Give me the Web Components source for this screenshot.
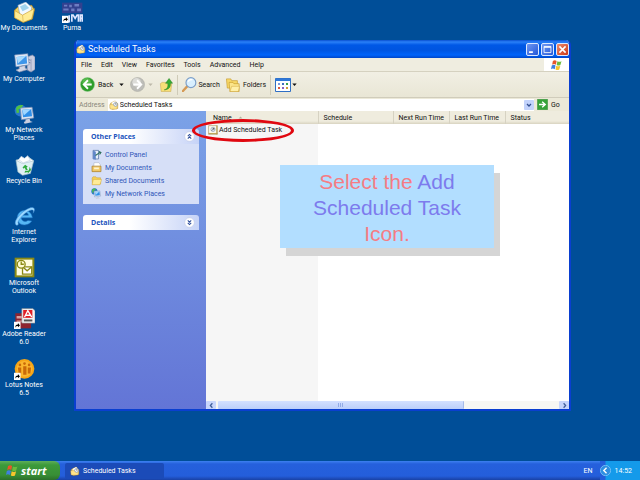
<!DOCTYPE html>
<html lang="en">
<head>
<meta charset="utf-8">
<title>Scheduled Tasks</title>
<style>
html,body{margin:0;height:100%}
body{font:7px/8px Roboto,"Noto Sans",sans-serif;color:#111;background:#004e98;overflow:hidden}
callout-note b{font-weight:400;color:var(--accent)}
</style>
</head>
<body>
<xp-desktop>
  <desk-icon slot="main" icon="mydocs">My Documents</desk-icon>
  <desk-icon slot="main" icon="computer">My Computer</desk-icon>
  <desk-icon slot="main" icon="network">My Network Places</desk-icon>
  <desk-icon slot="main" icon="bin">Recycle Bin</desk-icon>
  <desk-icon slot="main" icon="ie">Internet Explorer</desk-icon>
  <desk-icon slot="main" icon="outlook">Microsoft Outlook</desk-icon>
  <desk-icon slot="main" icon="adobe">Adobe Reader 6.0</desk-icon>
  <desk-icon slot="main" icon="lotus">Lotus Notes 6.5</desk-icon>
  <desk-icon slot="second" icon="puma">Puma</desk-icon>
  <xp-window slot="window" caption="Scheduled Tasks">
    <menu-bar></menu-bar>
    <tool-bar></tool-bar>
    <address-bar value="Scheduled Tasks"></address-bar>
    <explorer-view></explorer-view>
  </xp-window>
  <focus-ring slot="over"></focus-ring>
  <callout-note slot="over"><div>Select the <b>Add</b></div><div><b>Scheduled Task</b></div><div>Icon.</div></callout-note>
  <task-bar slot="bar"></task-bar>
</xp-desktop>
<script>
const shortcut = '<path d="M0 21h10v11H0z" fill="#fff"/><path d="M2 30c0-4 1-5 4-5v-2l3 3.500-3 3v-2c-2 0-3 .500-4 2.500z" fill="#000"/>';
const monitor = (x, y) => `<g transform="translate(${x} ${y})"><path d="M0 1l14-1 2 13-15 2z" fill="#dfe6f2" stroke="#7b93b8"/><path d="M2 3l11-1 1 9-11 1z" fill="#2f8fe8"/><path d="M2 3l11-1-9 8z" fill="#9fd6ff"/><path d="M6 15l5-1 1 3 3 1-10 2-1-2 2-1z" fill="#c9cfdf"/></g>`;
const folder = '<path d="M3 9l3-4h8l3 3h11v18l-3 2H4z" fill="#f4cf57" stroke="#b98a1c"/><path d="M3 28l4-15h24l-5 15z" fill="#ffec96" stroke="#c79a2b"/>';
const globe = '<circle cx="10" cy="10" r="9" fill="#2876cc"/><path d="M3 6c3-5 8-5 11-4l-3 5-4 1 1 5-4 1zM12 9l6-1c1 5-1 8-5 10z" fill="#4fc044"/>';
const flag = '<path d="M5 5c4-3 7-2 10 0l-2 10c-4-3-7-2-10 0z" fill="#e8562a"/><path d="M17 6c4 2 7 2 11 0l-3 10c-3 2-6 2-10 0z" fill="#6dbb3c"/><path d="M2 17c4-2 7-2 10 0l-2 10c-4-2-7-2-10 0z" fill="#3f7fe0"/><path d="M14 18c4 2 7 2 11 0l-3 10c-3 2-6 2-10 0z" fill="#f8c52c"/>';
const task = '<path d="M5 10L20 3l8 9v15l-17 3-8-4z" fill="#f6dc83" stroke="#b18b36" stroke-width="1.500"/><path d="M9 9l11-6 5 9-12 5z" fill="#fff"/><path d="M2 15h26l-3 14H4z" fill="#ffe58a" stroke="#b58b2d"/><circle cx="21" cy="14" r="6" fill="#fff" stroke="#667ea0" stroke-width="2"/><path d="M21 10v4h3" fill="none" stroke="#333" stroke-width="1.500"/>';
const chev = d => `<circle cx="16" cy="16" r="14" fill="#fff" stroke="#c3cce8" stroke-width="2"/><path d="${d}" fill="none" stroke="#2f4f9c" stroke-width="3"/>`;
const GLYPHS = {
  mydocs: '<path d="M1 12l6-5 20-2 4 7-3 14-14 5L1 24z" fill="#f5d25d" stroke="#b98a1c"/><path d="M6 5L18 0l9 8-2 14-15 3z" fill="#f2f9ff" stroke="#8aa7c0"/><path d="M9 7l8-4 6 6-10 5z" fill="#9fd3ee"/><path d="M1 13l12 7 18-10-4 16-13 5L1 24z" fill="#ffec94" stroke="#c99e33"/><path d="M13 20l1 10" stroke="#d8b04a"/>',
  computer: '<path d="M20 6l8-3 4 3v19l-6 4-6-3z" fill="#c9cde0" stroke="#7a83a5"/><path d="M26 9v19" stroke="#8a91b0"/><path d="M22 10l3 1m-3 3l3 1" stroke="#4c577d"/><path d="M1 3l20-2 2 17-20 3z" fill="#e3eaf6" stroke="#7890b8"/><path d="M4 6l15-2 1 12-15 2z" fill="#3f96ea"/><path d="M4 6l15-2L6 16z" fill="#a8dbff"/><path d="M8 21l9-2v4l4 2-13 4-5-3 5-2z" fill="#d3d7e6" stroke="#8b93ad"/>',
  network: `${globe}<g transform="translate(10 5) scale(1.250)">${monitor(0, 0)}</g>`,
  bin: '<path d="M3 8l20-4 7 5-5 19-12 3-7-5z" fill="#dff0f4" stroke="#9dbcc6"/><path d="M3 8l10 5 17-4-7-5z" fill="#fff" stroke="#a8c4ce"/><path d="M7 7l4-5 5 3 5-4 4 7-11 4z" fill="#fff" stroke="#bcd"/><path d="M13 19l4-4 4 3-2 1 2 4h-3l-2-4-1 2zM24 18l2 5-5 5v-2l-5 1 1-3h5l1-2z" fill="#2faa3b"/>',
  ie: '<path d="M27 23c-6 9-22 8-22-5C5 4 26 2 28 18H11c1 7 8 6 10 4zM11 14h11c-1-6-10-6-11 0z" fill="#55b7f4" stroke="#1f74c8" stroke-width=".800"/><path d="M3 29C-4 22 22-2 30 3c3 2 0 7-1 8 1-3 1-5-2-5C20 6 2 24 7 27c-1 2-2 3-4 2z" fill="#9bd8ff" stroke="#2a7bcb" stroke-width=".700"/>',
  outlook: '<path d="M1 1h30v30H1z" fill="#8a8a14"/><path d="M4 4h24v24H4z" fill="#fffde0"/><path d="M13 15h14v11H13z" fill="#fff" stroke="#8a8a14" stroke-width="2"/><path d="M13 15l7 6 7-6" fill="none" stroke="#8a8a14" stroke-width="2"/><circle cx="11" cy="11" r="6" fill="#fffbd0" stroke="#8a8a14" stroke-width="2"/><path d="M11 7v4h4" fill="none" stroke="#8a8a14" stroke-width="2"/>',
  adobe: `<path d="M2 8h24v23H2z" fill="#8e2430"/><path d="M4 12h10v4H4zm0 7h10v2H4z" fill="#d9a0a0"/><path d="M12 1h17l3 3v19H12z" fill="#f3f3f5" stroke="#999"/><path d="M14 3h14v12H14z" fill="#df1f26"/><path d="M16 14l5-10 6 10m-9-3h7" stroke="#fff" stroke-width="2" fill="none"/><path d="M15 19h13" stroke="#555" stroke-width="3"/>${shortcut}`,
  lotus: `<circle cx="16" cy="15" r="15" fill="#f6a516"/><circle cx="16" cy="15" r="12" fill="#fbb62e"/><g fill="#c96a08"><circle cx="9" cy="9" r="2"/><circle cx="16" cy="7" r="2"/><circle cx="23" cy="9" r="2"/><path d="M6 13h5v9H7zM14 11h5v13h-5zM21 13h5l-1 9h-4z"/></g>${shortcut}`,
  puma: `<path d="M0 1h31v16H0z" fill="#32418f"/><path d="M3 4h5v3H3zm8 0h4v4h-4zm8-1h7v4h-7zM2 10h8v3H2zm12 0h5v4h-5zm9 0h6v4h-6z" fill="#6d7cc2"/><path d="M11 20v10H7m8 0V20h2l3 5 3-5h2v10m3 0V20h3v10m-3-5h3" stroke="#dfe6ff" stroke-width="2.500" fill="none"/>${shortcut}`,
  task,
  back: '<circle cx="16" cy="16" r="15" fill="#2d9d2a" stroke="#8cc98a"/><circle cx="14" cy="11" r="9" fill="#6fcb62" opacity=".600"/><path d="M17 7l-9 9 9 9m-8-9h16" fill="none" stroke="#fff" stroke-width="4"/>',
  forward: '<circle cx="16" cy="16" r="15" fill="#bdbdb8" stroke="#a4a49f"/><circle cx="14" cy="11" r="9" fill="#dcdcd8"/><path d="M15 7l9 9-9 9m8-9H7" fill="none" stroke="#fff" stroke-width="4"/>',
  up: '<path d="M3 13l4-3h8l3 3h11l-2 18H5z" fill="#f7df78" stroke="#c09a36"/><path d="M12 27c8-2 9-8 8-15h-5l8-11 8 11h-5c1 9-4 15-14 15z" fill="#37ad32" stroke="#19791a"/>',
  search: '<path d="M12 19L2 30" stroke="#d59a55" stroke-width="5" stroke-linecap="round"/><circle cx="19" cy="12" r="10.500" fill="#d8efff" stroke="#7c9fc9" stroke-width="2.500"/><path d="M13 10c2-4 6-5 9-4" stroke="#fff" stroke-width="3" fill="none"/>',
  folders: '<path d="M1 2h10l2 4h13v17H3z" fill="#f7d867" stroke="#c79a2b" stroke-width="1.500"/><path d="M7 10h9l2 3h12v18H9z" fill="#fbe58b" stroke="#c79a2b" stroke-width="1.500"/><path d="M9 31l4-12h18l-3 12z" fill="#fff0a8" stroke="#c79a2b"/>',
  views: '<path d="M1 3h30v26H1z" fill="#fff" stroke="#2f6fc4" stroke-width="2"/><path d="M1 3h30v5H1z" fill="#2f78d8"/><path d="M6 12h4v4H6z" fill="#7a9adf"/><path d="M14 12h4v4h-4z" fill="#3f6fc0"/><path d="M22 12h4v4h-4z" fill="#36a24a"/><path d="M6 20h4v4H6z" fill="#d8573c"/><path d="M14 20h4v4h-4z" fill="#8b5fc0"/><path d="M22 20h4v4h-4z" fill="#d59a35"/>',
  go: '<path d="M1 1h30v30H1z" fill="#36a238" stroke="#1f7a25"/><path d="M6 16h17M15 8l9 8-9 8" fill="none" stroke="#fff" stroke-width="4"/>',
  flag,
  panel: '<path d="M6 4h16v25H6z" fill="#e9f0fb" stroke="#48699c" stroke-width="2"/><path d="M6 4l8 4v23l-8-3z" fill="#5f86c8"/><path d="M13 19L27 9m-4-2l6 3-4 6" stroke="#2f6f5c" stroke-width="3" fill="none"/>',
  docs: '<path d="M9 2h14l4 6v14H7z" fill="#fff" stroke="#8b93a5"/><path d="M3 12h26v16H3z" fill="#f1c968" stroke="#a67a25" stroke-width="2"/><path d="M9 16h14v5H9z" fill="#fff4cf"/>',
  folder,
  net: `${globe}<g transform="translate(9 8) scale(1.200)">${monitor(0, 0)}</g>`,
  addtask: '<path d="M2 2h28v28H2z" fill="#fffdf0" stroke="#a3905a" stroke-width="2"/><path d="M2 27h28M28 2v28" stroke="#b89c4d" stroke-width="3"/><circle cx="16" cy="14" r="7" fill="#dfe8f5" stroke="#8a98ae" stroke-width="2"/><path d="M12 18l7-7m-4 0h4v4" stroke="#333" stroke-width="2" fill="none"/>',
  collapse: chev('M11 15l5-5 5 5M11 22l5-5 5 5'),
  expand: chev('M11 10l5 5 5-5M11 17l5 5 5-5'),
  min: '<path d="M6 21h11v5H6z" fill="#fff"/>',
  max: '<path d="M6 7h20v18H6z" fill="none" stroke="#fff" stroke-width="2.500"/><path d="M6 9h20" stroke="#fff" stroke-width="4"/>',
  close: '<path d="M7 7l18 18M25 7L7 25" stroke="#fff" stroke-width="4.500"/>',
  down: '<path d="M8 12l8 8 8-8" stroke="#344f8f" stroke-width="5" fill="none"/>',
  left: '<path d="M20 6l-9 10 9 10" stroke="#42609c" stroke-width="6" fill="none"/>',
  right: '<path d="M12 6l9 10-9 10" stroke="#42609c" stroke-width="6" fill="none"/>',
  caret: '<path d="M2 10h28L16 25z" fill="#111"/>',
  caretoff: '<path d="M2 10h28L16 25z" fill="#bdb9aa"/>',
  sort: '<path d="M4 22h24L16 10z" fill="#b5b09c"/>',
  tray: '<circle cx="16" cy="16" r="15" fill="#2f8fe0" stroke="#8fd0ff" stroke-width="2"/><path d="M19 8l-8 8 8 8" stroke="#fff" stroke-width="4" fill="none"/>'
};
const g = (name, size) => `<xp-glyph name="${name}" style="--size:${size}px"></xp-glyph>`;
const define = (tag, html) => customElements.define(tag, class extends HTMLElement {
  constructor() {
    super();
    this.attachShadow({mode: 'open'});
  }
  connectedCallback() {
    this.shadowRoot.innerHTML = '<style>:host,*{box-sizing:border-box}button,input{font:inherit;color:inherit;background:none;border:0;padding:0;margin:0}</style>' + (typeof html === 'function' ? html(this) : html);
  }
});

define('xp-glyph', el => `<style>:host{display:block;flex:none;width:var(--size);height:var(--size)}svg{display:block;width:100%;height:100%}</style>
<svg viewBox="0 0 32 32" aria-hidden="true">${GLYPHS[el.getAttribute('name')]}</svg>`);

define('desk-icon', el => `<style>:host{display:block;color:#fff;text-align:center}
button{display:flex;flex-direction:column;align-items:center;gap:1px;width:100%}</style>
<button>${g(el.getAttribute('icon'), 21)}<span><slot></slot></span></button>`);

define('xp-desktop', `<style>:host{display:flex;flex-direction:column;min-height:100vh;position:relative;background:#004e98}
main{flex:1;display:grid;grid-template-columns:48px 48px 1fr;position:relative}
.col{display:grid;grid-auto-rows:51px;align-content:start;padding-top:2px}
.win{position:absolute;top:40px;left:74px;right:69px;bottom:50px;display:flex}
::slotted(xp-window){flex:1}</style>
<main><div class="col"><slot name="main"></slot></div><div class="col"><slot name="second"></slot></div>
<div class="win"><slot name="window"></slot></div><slot name="over"></slot></main><slot name="bar"></slot>`);

define('xp-window', el => `<style>:host{display:flex;flex-direction:column;background:#ece9d8;border:2px solid #0a3fd0;border-top:0;border-radius:5px 5px 0 0;overflow:hidden}
header{display:flex;align-items:center;gap:2px;height:18px;background:linear-gradient(#0a50d0,#2a80f8 2px,#0058e6 5px,#0055e0 10px,#0064fa 15px,#0046c8);color:#fff}
h1{font:400 9px/12px Roboto,"Noto Sans",sans-serif;margin:0;flex:1}
.b{display:grid;place-items:center;width:13px;height:13px;border:1px solid #dce8ff;border-radius:2px;background:linear-gradient(135deg,#6f97f2,#2458d8)}
.x{background:linear-gradient(135deg,#f08a6c,#c93a17)}
.set{display:flex;gap:2px}</style>
<header>${g('task', 10)}<h1>${el.getAttribute('caption')}</h1><div class="set"><button class="b" aria-label="Minimize">${g('min', 11)}</button><button class="b" aria-label="Maximize">${g('max', 11)}</button><button class="b x" aria-label="Close">${g('close', 11)}</button></div></header><slot></slot>`);

define('menu-bar', `<style>:host{display:flex;height:14px;border-bottom:1px solid #d5d1c0;background:#efede0}
nav{flex:1;display:flex;align-items:center;gap:9px;padding-left:5px}
.f{width:25px;background:#fff;display:grid;place-items:center}</style>
<nav><button>File</button><button>Edit</button><button>View</button><button>Favorites</button><button>Tools</button><button>Advanced</button><button>Help</button></nav><div class="f">${g('flag', 12)}</div>`);

define('tool-bar', `<style>:host{display:flex;align-items:center;height:26px;padding-left:4px;gap:4px;border-bottom:1px solid #d0ccbb;background:linear-gradient(#f1efe4,#e9e6d5)}
button{display:flex;align-items:center;gap:3px}
div{display:flex;align-items:center;gap:6px}
i{width:1px;height:20px;background:#cfcbb8}
.s{gap:1px}</style>
<div><button>${g('back', 15)}Back</button><button aria-label="Back history">${g('caret', 5)}</button>
<button aria-label="Forward" disabled>${g('forward', 15)}${g('caretoff', 5)}</button><button aria-label="Up">${g('up', 14)}</button></div><i></i>
<div><button class="s">${g('search', 15)}Search</button><button>${g('folders', 14)}Folders</button></div><i></i><button class="s" aria-label="Views">${g('views', 16)}${g('caret', 5)}</button>`);

define('address-bar', el => `<style>:host{display:flex;align-items:center;height:13px;padding-left:3px;gap:3px;background:#ece9d8}
label{color:#8a877a}
.f{flex:1;display:flex;align-items:center;gap:1px;height:12px;background:#fff;padding-left:1px}
input{flex:1;min-width:0;height:10px;outline:0}
.d{display:grid;place-items:center;width:10px;height:10px;background:#c3d3fc;border-radius:1px}
.go{display:flex;align-items:center;gap:3px;width:32px}</style>
<label for="a">Address</label><div class="f">${g('task', 10)}<input id="a" value="${el.getAttribute('value')}"><button class="d" aria-label="Show addresses">${g('down', 8)}</button></div><button class="go">${g('go', 11)}Go</button>`);

define('side-panel', el => `<style>:host{display:block;color:#2e56b8}
h2{display:flex;align-items:center;justify-content:space-between;margin:0;height:15px;padding:0 4px 0 8px;border-radius:3px 3px 0 0;background:linear-gradient(90deg,#fff 40%,#c6d3f7);font:700 7px/8px "Open Sans","Noto Sans",sans-serif;color:#2154bd}
.body{background:#d6dff7}</style>
<h2>${el.getAttribute('caption')}<button aria-label="Toggle ${el.getAttribute('caption')}">${g(el.getAttribute('state'), 11)}</button></h2><div class="body"><slot></slot></div>`);

define('place-link', el => `<style>:host{display:block}a{display:flex;align-items:center;gap:3px;height:13px;padding-left:8px;color:inherit;text-decoration:none}</style>
<a href="#">${g(el.getAttribute('icon'), 11)}<slot></slot></a>`);

define('task-list', `<style>:host{display:flex;flex-direction:column;background:linear-gradient(90deg,#f6f6f6 112px,#fff 112px)}
table{width:100%;table-layout:fixed;border-collapse:collapse}
th{height:13px;padding:0 0 0 5px;text-align:left;font-weight:400;background:linear-gradient(#efecde 10px,#d8d3c0);border-right:1px solid #d6d2c2;white-space:nowrap}
th:first-child{padding-left:7px}
th:last-child{border:0}
td{padding:0 0 0 2px;height:12px}
td div{display:flex;align-items:center;gap:1px}
th div{display:flex;align-items:center;gap:6px}
.n{width:112px}.s{width:75px}.r{width:56px}
scroll-bar{margin-top:auto}</style>
<table><thead><tr><th class="n"><div>Name${g('sort', 5)}</div></th><th class="s">Schedule</th><th class="r">Next Run Time</th><th class="r">Last Run Time</th><th>Status</th></tr></thead>
<tbody><tr><td><div>${g('addtask', 10)}Add Scheduled Task</div></td><td></td><td></td><td></td><td></td></tr></tbody></table><scroll-bar></scroll-bar>`);

define('scroll-bar', `<style>:host{display:flex;height:8px;background:#f7f7f3}
button{display:grid;place-items:center;width:10px;background:#c8d6fb;border-radius:1px}
.t{flex:1;padding-left:2px}
.h{height:8px;width:72%;background:linear-gradient(#d3e0ff,#bccffa);border-right:1px solid #a5bbea;border-radius:1px;display:flex;gap:1px;justify-content:center;align-items:center}
.h i{width:1px;height:4px;background:#93abe6}</style>
<button aria-label="Scroll left">${g('left', 7)}</button><div class="t"><div class="h"><i></i><i></i><i></i></div></div><button aria-label="Scroll right">${g('right', 7)}</button>`);

define('explorer-view', `<style>:host{flex:1;display:flex}
aside{width:130px;padding:18px 7px;display:flex;flex-direction:column;gap:11px;background:linear-gradient(#7ba2e7,#6375d6)}
place-link:first-child{padding-top:4px}place-link:last-child{padding-bottom:4px}
task-list{flex:1}</style>
<aside><side-panel caption="Other Places" state="collapse"><place-link icon="panel">Control Panel</place-link><place-link icon="docs">My Documents</place-link><place-link icon="folder">Shared Documents</place-link><place-link icon="net">My Network Places</place-link></side-panel>
<side-panel caption="Details" state="expand"></side-panel></aside><task-list></task-list>`);

define('focus-ring', `<style>:host{position:absolute;left:192px;top:119px;width:102px;height:23px;border:3px solid #e00810;border-radius:50%;pointer-events:none}</style>`);

define('callout-note', `<style>:host{position:absolute;left:280px;top:165px;width:214px;padding:4px 20px 1px;background:#b2deff;box-shadow:6px 8px 0 #d5d5d5;font:21px/26px "Liberation Sans",Arial,sans-serif;color:#f57c84;text-align:center;--accent:#7d7bed}
</style><slot></slot>`);

define('task-bar', `<style>:host{display:flex;align-items:stretch;height:19px;background:linear-gradient(#3d80f0,#2560dc 3px,#245edb 15px,#1941a5);color:#fff}
.start{display:flex;align-items:center;gap:2px;width:60px;padding-left:6px;border-radius:0 6px 6px 0;background:linear-gradient(#5fae5a,#3c9a3a 4px,#388e36 14px,#2b6f2a);font:italic 700 11px/14px "Open Sans","Noto Sans",sans-serif}
.task{display:flex;align-items:center;gap:3px;width:99px;margin:2px 0 1px 5px;padding-left:5px;background:#1b4bb8;border-radius:2px}
.tray{margin-left:auto;display:flex;align-items:center;gap:7px}
.clock{display:flex;align-items:center;align-self:stretch;gap:4px;padding-right:8px;background:linear-gradient(90deg,#245edb 5px,#149aea 6px)}</style>
<button class="start">${g('flag', 13)}start</button><button class="task">${g('task', 10)}Scheduled Tasks</button><div class="tray"><span>EN</span><div class="clock"><button aria-label="Show hidden icons">${g('tray', 11)}</button><time>14:52</time></div></div>`);
</script>
</body>
</html>
